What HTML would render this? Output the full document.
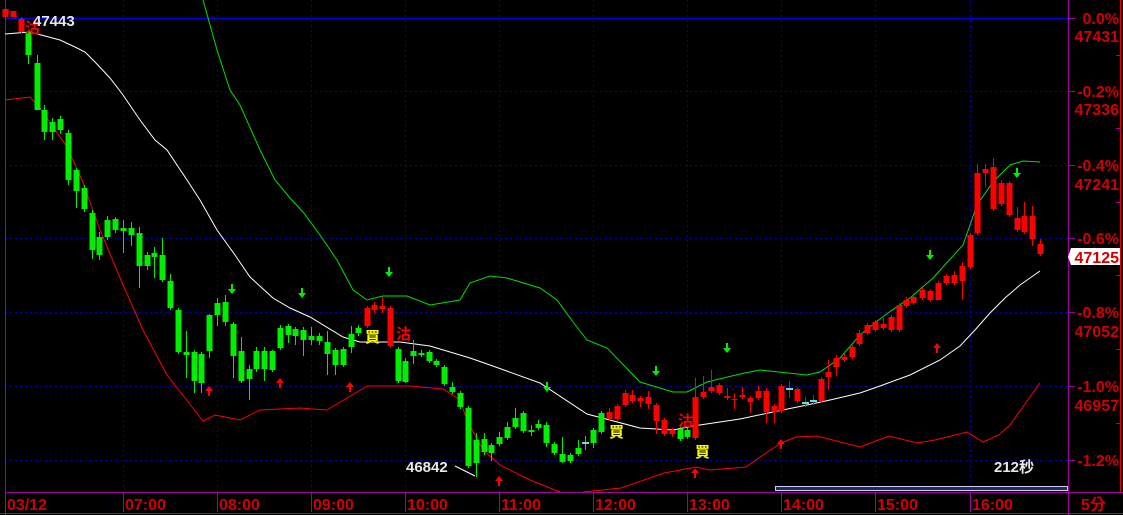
<!DOCTYPE html>
<html><head><meta charset="utf-8"><style>
html,body{margin:0;padding:0;background:#000;width:1123px;height:515px;overflow:hidden}
svg{display:block}
text{font-family:"Liberation Sans","Noto Sans CJK TC",sans-serif;font-weight:bold}
</style></head><body>
<svg width="1123" height="515" viewBox="0 0 1123 515" xmlns="http://www.w3.org/2000/svg">
<rect width="1123" height="515" fill="#000"/>
<g stroke="#0000b0" stroke-width="1" stroke-dasharray="2,3">
<path d="M5 91.5H1068M5 165.5H1068M5 238.5H1068M5 312.5H1068M5 386.5H1068M5 460.5H1068"/>
<path d="M123.5 0V492M217.5 0V492M311.5 0V492M405.5 0V492M499.5 0V492M593.5 0V492M687.5 0V492M781.5 0V492M875.5 0V492M970.5 0V492"/>
</g>
<path d="M5 18.5H1068" stroke="#0000dd" stroke-width="1.5"/>
<path d="M5.5 0V515" stroke="#e00000"/>
<path d="M1068.5 0V515" stroke="#a000a0"/>
<path d="M5 492.5H1123" stroke="#a000a0"/>
<path d="M0 513.5H1123" stroke="#e00000"/>
<path d="M1120.5 0V492" stroke="#e00000"/>
<path d="M1068 18.5h7M1068 91.5h7M1068 165.5h7M1068 238.5h7M1068 312.5h7M1068 386.5h7M1068 460.5h7M1116 55.5h5M1116 128.5h5M1116 202.5h5M1116 275.5h5M1116 349.5h5M1116 423.5h5" stroke="#a000a0"/>
<path d="M123.5 492V512M217.5 492V512M311.5 492V512M405.5 492V512M499.5 492V512M593.5 492V512M687.5 492V512M781.5 492V512M875.5 492V512M970.5 492V512" stroke="#a000a0"/>
<polyline fill="none" stroke="#00e000" stroke-width="1" points="203,0 217,50 230,90 240,105 260,150 275,180 290,198 303,212 320,235 337,260 353,290 367,300 383,296 407,296 430,305 460,300 470,283 490,276 507,278 540,288 557,300 573,322 587,340 607,348 640,382 673,392 687,392 707,382 740,374 760,370 807,375 820,372 840,358 860,335 885,315 910,298 933,278 963,245 977,205 993,182 1010,165 1023,161 1040,162"/>
<polyline fill="none" stroke="#ffffff" stroke-width="1" points="5,34 30,32 45,36 60,40 75,47 85,52 95,62 110,78 123,95 140,120 155,140 167,150 187,180 200,200 217,230 235,255 250,277 273,298 290,308 310,317 343,337 360,342 400,342 430,346 450,352 470,358 490,365 540,383 587,414 640,428 673,430 693,426 740,419 773,412 807,405 830,400 860,393 880,386 910,375 940,360 960,346 975,330 990,313 1005,298 1020,285 1040,271"/>
<polyline fill="none" stroke="#ff0000" stroke-width="1" points="5,100 30,97 40,108 67,147 82,180 100,230 123,285 143,330 167,375 185,398 203,421 215,415 240,420 260,410 300,408 327,410 347,398 367,386 410,386 443,389 460,400 467,420 483,450 500,465 530,480 560,492"/>
<polyline fill="none" stroke="#ff0000" stroke-width="1" points="583,492 621,488 664,473 696,467 710,470 746,467 760,457 781,443 796,437 817,436 860,447 889,436 917,443 935,440 967,432 983,442 999,435 1010,425 1040,383"/>
<polyline fill="none" stroke="#fff" stroke-width="1" points="455,466 475,476"/>
<path fill="none" stroke="#00ee00" stroke-width="1" d="M28.5 32V64M37.5 55V110M44.5 105V140M52.5 118V140M60.5 116V134M68.5 130V185M76.5 168V208M84.5 185V212M92.5 210V259M99.5 232V260M107.5 216V240M115.5 217V233M123.5 220V253M131.5 222V246M139.5 227V288M147.5 252V270M154.5 247V278M162.5 238V282M170.5 274V310M178.5 308V354M186.5 331V378M194.5 350V393M201.5 352V393M209.5 314V358M217.5 298V326M225.5 295V326M233.5 322V378M241.5 337V383M249.5 365V400M256.5 347V372M264.5 347V381M272.5 350V372M280.5 325V350M288.5 324V343M295.5 327V345M303.5 327V356M311.5 327V345M319.5 333V345M327.5 331V375M335.5 348V375M343.5 347V367M351.5 326V353M358.5 325V336M398.5 347V383M405.5 358V383M413.5 340V364M421.5 350V357M429.5 350V363M436.5 359V367M444.5 365V386M452.5 382V394M460.5 391V409M468.5 406V468M476.5 433V477M484.5 433V455M491.5 443V461M499.5 432V446M507.5 422V440M515.5 408V429M523.5 411V433M531.5 425V436M538.5 420V430M546.5 422V447M554.5 442V455M562.5 437V463M570.5 453V463M578.5 440V456M585.5 436V450M593.5 428V448M601.5 411V434M680.5 427V441M687.5 428V439"/>
<path fill="none" stroke="#00ee00" stroke-width="6" d="M28.5 32V55M37.5 63V110M44.5 110V132M52.5 122V132M60.5 119V130M68.5 133V180M76.5 170V191M84.5 188V209M92.5 213V250M99.5 237V255M107.5 220V237M115.5 219V230M123.5 228V231M131.5 228V235M139.5 233V266M147.5 255V266M154.5 253V257M162.5 255V280M170.5 281V308M178.5 310V352M186.5 352V355M194.5 352V381M201.5 354V383M209.5 315V351M217.5 303V315M225.5 302V322M233.5 324V356M241.5 351V381M249.5 369V379M256.5 351V369M264.5 351V369M272.5 351V370M280.5 328V348M288.5 326V335M295.5 329V336M303.5 330V340M311.5 336V340M319.5 336V341M327.5 342V354M335.5 350V365M343.5 349V365M351.5 334V347M358.5 328V333M398.5 349V381M405.5 361V382M413.5 351V356M421.5 353V355M429.5 352V361M436.5 361V365M444.5 367V384M452.5 387V392M460.5 393V407M468.5 408V466M476.5 440V463M484.5 439V452M491.5 445V453M499.5 437V444M507.5 427V438M515.5 418V427M523.5 413V431M531.5 430V432M538.5 424V428M546.5 425V443M554.5 444V453M562.5 454V462M570.5 455V461M578.5 448V454M585.5 442V444M593.5 430V443M601.5 413V432M680.5 429V439M687.5 430V437"/>
<path fill="none" stroke="#ff0000" stroke-width="1" d="M5.5 7V19M21.5 17V34M367.5 306V328M374.5 302V313M382.5 297V313M390.5 306V348M609.5 408V421M617.5 404V421M625.5 390V407M632.5 390V403M640.5 396V407M648.5 391V409M656.5 403V434M664.5 418V436M672.5 428V437M695.5 378V440M703.5 376V399M711.5 370V393M719.5 383V395M727.5 388V400M734.5 393V409M742.5 387V399M750.5 396V413M758.5 386V400M766.5 388V423M774.5 404V423M781.5 384V413M789.5 381V398M797.5 387V403M805.5 397V407M813.5 395V405M821.5 377V403M828.5 360V390M836.5 355V376M844.5 354V362M852.5 345V359M859.5 330V346M867.5 323V335M875.5 320V332M883.5 318V330M891.5 315V332M899.5 303V332M906.5 297V308M913.5 293V305M922.5 288V300M930.5 289V302M938.5 281V292M946.5 274V285M954.5 271V285M962.5 262V300M970.5 233V269M977.5 164V235M985.5 164V187M993.5 158V211M1001.5 180V206M1009.5 181V217M1017.5 207V232M1024.5 202V234M1032.5 206V246M1040.5 239V256"/>
<path fill="none" stroke="#ff0000" stroke-width="6" d="M5.5 9V17M13.5 11V17M21.5 19V32M367.5 308V326M374.5 305V310M382.5 306V309M390.5 308V346M609.5 412V419M617.5 406V419M625.5 393V405M632.5 395V401M640.5 398V401M648.5 397V404M656.5 405V421M664.5 420V434M672.5 430V434M695.5 397V438M703.5 392V397M711.5 387V391M719.5 385V393M727.5 396V398M734.5 399V400M742.5 395V397M750.5 398V402M758.5 391V398M766.5 391V412M774.5 406V412M781.5 386V411M797.5 389V401M821.5 379V401M828.5 372V377M836.5 358V367M844.5 357V360M852.5 347V357M859.5 333V344M867.5 325V333M875.5 322V330M883.5 324V328M891.5 317V330M899.5 305V330M906.5 300V306M913.5 297V303M922.5 290V298M930.5 291V300M938.5 283V300M946.5 276V283M954.5 275V283M962.5 266V281M970.5 235V267M977.5 173V233M985.5 169V173M993.5 167V209M1001.5 183V204M1009.5 183V215M1017.5 218V230M1024.5 216V232M1032.5 216V239M1040.5 244V254"/>
<path stroke="#60e0e0" stroke-width="2" d="M786 389h7M802 403h7M810 401h7M582 443h7"/>
<g fill="#00ee00">
<path d="M231 284h2v5h3l-4 5-4-5h3z"/><path d="M301 288h2v5h3l-4 5-4-5h3z"/><path d="M388 267h2v5h3l-4 5-4-5h3z"/><path d="M546 382h2v5h3l-4 5-4-5h3z"/><path d="M655 366h2v5h3l-4 5-4-5h3z"/><path d="M726 343h2v5h3l-4 5-4-5h3z"/><path d="M929 250h2v5h3l-4 5-4-5h3z"/><path d="M1016 168h2v5h3l-4 5-4-5h3z"/>
</g>
<g fill="#ff0000">
<path d="M208 396h2v-5h3l-4-5-4 5h3z"/><path d="M279 388h2v-5h3l-4-5-4 5h3z"/><path d="M349 392h2v-5h3l-4-5-4 5h3z"/><path d="M498 486h2v-5h3l-4-5-4 5h3z"/><path d="M694 478h2v-5h3l-4-5-4 5h3z"/><path d="M780 449h2v-5h3l-4-5-4 5h3z"/><path d="M936 353h2v-5h3l-4-5-4 5h3z"/>
</g>
<g font-size="15">
<text x="365" y="342" fill="#ffff00">買</text>
<text x="609" y="437" fill="#ffff00">買</text>
<text x="695" y="457" fill="#ffff00">買</text>
<text x="396" y="339" fill="#ff0000">沽</text>
<text x="25" y="33" fill="#ff0000">沽</text>
<text x="678" y="426" fill="#ff0000">沽</text>
</g>
<text x="33" y="26" fill="#e8e8e8" font-size="15">47443</text>
<text x="406" y="472" fill="#e8e8e8" font-size="15">46842</text>
<text x="994" y="472" fill="#e8e8e8" font-size="15">212秒</text>
<rect x="775.5" y="486.5" width="292" height="4" fill="#1a2a6a" stroke="#d0d0e0"/>
<g fill="#d00000" font-size="16" text-anchor="end">
<text x="1119" y="24">0.0%</text><text x="1119" y="42">47431</text>
<text x="1119" y="97">-0.2%</text><text x="1119" y="115">47336</text>
<text x="1119" y="171">-0.4%</text><text x="1119" y="190">47241</text>
<text x="1119" y="244">-0.6%</text>
<text x="1119" y="318">-0.8%</text><text x="1119" y="337">47052</text>
<text x="1119" y="392">-1.0%</text><text x="1119" y="411">46957</text>
<text x="1119" y="466">-1.2%</text>
</g>
<path d="M1068 257l3-9h49v17h-49z" fill="#fff"/>
<text x="1119" y="263" fill="#d00000" font-size="16" text-anchor="end">47125</text>
<g fill="#d00000" font-size="16">
<text x="7" y="510">03/12</text><text x="125" y="510">07:00</text><text x="219" y="510">08:00</text><text x="313" y="510">09:00</text><text x="407" y="510">10:00</text><text x="501" y="510">11:00</text><text x="595" y="510">12:00</text><text x="689" y="510">13:00</text><text x="783" y="510">14:00</text><text x="877" y="510">15:00</text><text x="972" y="510">16:00</text><text x="1081" y="510">5分</text>
</g>
</svg>
</body></html>
